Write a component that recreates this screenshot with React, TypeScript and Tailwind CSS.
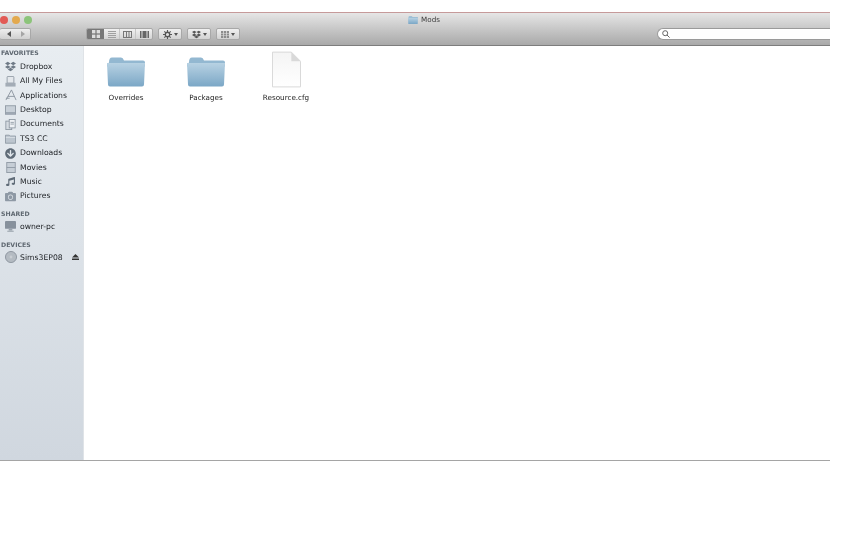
import React from "react";
import { FaDropbox, FaMusic, FaCamera, FaArrowCircleDown } from "react-icons/fa";

const font = "font-['DejaVu_Sans','Liberation_Sans',sans-serif]";

// small blue mac folder
function Folder({ w, h }: { w: number; h: number }) {
  return (
    <svg width={w} height={h} viewBox="0 0 38 30">
      <defs>
        <linearGradient id="fold" x1="0" y1="0" x2="0" y2="1">
          <stop offset="0" stopColor="#b8d2e3" />
          <stop offset="1" stopColor="#7ba7c6" />
        </linearGradient>
      </defs>
      <path d="M2 6 Q2 1 5 1 H14 Q16 1 17 4 H36 Q38 4 38 6 V10 H0 V8 Z" fill="#93b8d1" />
      <path d="M0 6.5 H38 L37 28 Q37 30 35 30 H3 Q1 30 1 28 Z" fill="url(#fold)" />
    </svg>
  );
}

function GrayIcon({ kind }: { kind: string }) {
  const c = "#8b95a0";
  if (kind === "dropbox") return <FaDropbox size={11} color="#6f7a86" />;
  if (kind === "downloads") return <FaArrowCircleDown size={11} color="#5f6b77" />;
  if (kind === "music") return <FaMusic size={9} color="#5f6b77" />;
  if (kind === "pictures") return <FaCamera size={11} color="#8e99a5" />;
  if (kind === "files")
    return (
      <svg width="11" height="11" viewBox="0 0 13 13">
        <rect x="2.5" y="0.5" width="8" height="8" rx="1" fill="#e4e8ec" stroke={c} />
        <path d="M0.5 8 H12.5 V12.5 H0.5 Z" fill="#a3acb6" />
      </svg>
    );
  if (kind === "apps")
    return (
      <svg width="12" height="12" viewBox="0 0 13 13" fill="none" stroke="#8b95a0" strokeWidth="1">
        <path d="M1 12 L7 1 L12 12 M3 8 H10 M1 10 L5 10" />
      </svg>
    );
  if (kind === "desktop")
    return (
      <svg width="11" height="10" viewBox="0 0 13 11">
        <rect x="0.5" y="0.5" width="12" height="10" fill="#c8d0d8" stroke={c} />
        <rect x="1" y="8" width="11" height="2" fill="#98a2ad" />
      </svg>
    );
  if (kind === "documents")
    return (
      <svg width="11" height="11" viewBox="0 0 12 13">
        <rect x="0.5" y="2.5" width="7" height="10" fill="#d5dbe1" stroke={c} />
        <rect x="4.5" y="0.5" width="7" height="10" fill="#eef1f4" stroke={c} />
        <path d="M6 4 H10 M6 6 H10" stroke={c} />
      </svg>
    );
  if (kind === "folder")
    return (
      <svg width="11" height="10" viewBox="0 0 13 11">
        <path d="M0.5 1 H5 L6 2 H12.5 V10.5 H0.5 Z" fill="#bcc5ce" stroke={c} />
        <rect x="1" y="3" width="11" height="1" fill="#dfe4e9" />
      </svg>
    );
  if (kind === "movies")
    return (
      <svg width="10" height="11" viewBox="0 0 11 13">
        <rect x="0.5" y="0.5" width="10" height="12" fill="#c6ced6" stroke={c} />
        <path d="M0.5 6.5 H10.5" stroke={c} />
      </svg>
    );
  if (kind === "pc")
    return (
      <svg width="11" height="11" viewBox="0 0 12 12">
        <rect x="0" y="0" width="12" height="8.5" rx="1" fill="#87919c" />
        <rect x="4" y="8.5" width="4" height="2" fill="#98a2ab" />
        <rect x="2.5" y="10.5" width="7" height="1.5" fill="#a9b2ba" />
      </svg>
    );
  return (
    <svg width="12" height="12" viewBox="0 0 13 13">
      <circle cx="6.5" cy="6.5" r="6" fill="#b4bbc2" stroke="#8b949d" />
      <circle cx="6.5" cy="6.5" r="1.5" fill="#c9ced3" />
    </svg>
  );
}

function Heading({ text, cls }: { text: string; cls: string }) {
  return (
    <div className={`pl-[1px] h-[10px] flex items-center text-[6.2px] font-bold text-[#5f6871] ${cls}`}>{text}</div>
  );
}

function Row({ icon, label, eject }: { icon: string; label: string; eject?: boolean }) {
  return (
    <div className="h-[14.4px] flex items-center text-[7.7px] text-[#1c1f23]">
      <span className="w-[20px] pl-[1px] flex items-center justify-center shrink-0">
        <GrayIcon kind={icon} />
      </span>
      <span className="flex-1">{label}</span>
      {eject && (
        <svg className="mr-[4px]" width="7" height="6" viewBox="0 0 7 6" fill="#333">
          <path d="M3.5 0L7 3.6H0Z" />
          <rect y="4.5" width="7" height="1.5" />
        </svg>
      )}
    </div>
  );
}

function Btn({ children, w }: { children: React.ReactNode; w: string }) {
  return (
    <div className={`${w} h-[12px] rounded-[2px] border border-[#a8a8a8] bg-gradient-to-b from-[#f0f0f0] to-[#d2d2d2] flex items-center justify-center gap-[2px]`}>
      {children}
    </div>
  );
}

function Caret() {
  return <span className="w-0 h-0 border-l-[2px] border-r-[2px] border-t-[3px] border-l-transparent border-r-transparent border-t-[#555]" />;
}

function Item({ label, children }: { label: string; children: React.ReactNode }) {
  return (
    <div className="w-[80px] flex flex-col items-center">
      <div className="h-[38px] flex items-end">{children}</div>
      <div className="mt-[5px] text-[7.2px] text-[#222]">{label}</div>
    </div>
  );
}

export default function App() {
  return (
    <div className={`w-[864px] h-[540px] bg-white overflow-hidden pt-[12px] blur-[0.3px] ${font}`}>
      <div className="w-[830px] h-[449px] flex flex-col border-b border-[#a5a5a5]">
        {/* title bar + toolbar */}
        <div className="h-[34px] shrink-0 border-t border-t-[#c69a9a] border-b border-b-[#7d7d7d] bg-gradient-to-b from-[#e6e6e6] to-[#a9a9a9] flex flex-col">
          <div className="h-[14px] relative flex items-center justify-center">
            <div className="absolute left-0 top-[3px] flex gap-[4.5px]">
              <span className="w-[7.5px] h-[7.5px] rounded-full bg-[#e25a55]" />
              <span className="w-[7.5px] h-[7.5px] rounded-full bg-[#e3a94e]" />
              <span className="w-[7.5px] h-[7.5px] rounded-full bg-[#8cc47a]" />
            </div>
            <div className="ml-[18px] flex items-center gap-[3px] text-[7.2px] text-[#3c3c3c]">
              <Folder w={10} h={8} />
              <span>Mods</span>
            </div>
          </div>
          <div className="flex items-center h-[14px]">
            <div className="w-[31px] h-[12px] rounded-[2px] border border-[#a8a8a8] border-l-0 bg-gradient-to-b from-[#eeeeee] to-[#d0d0d0] flex items-center justify-around pl-[2px]">
              <span className="w-0 h-0 border-y-[3px] border-y-transparent border-r-[4px] border-r-[#555]" />
              <span className="w-0 h-0 border-y-[3px] border-y-transparent border-l-[4px] border-l-[#a5a5a5]" />
            </div>
            <div className="ml-[55px] w-[67px] h-[12px] rounded-[2px] border border-[#a8a8a8] bg-gradient-to-b from-[#f0f0f0] to-[#d4d4d4] flex overflow-hidden">
              <div className="w-[17px] bg-[#777777] flex items-center justify-center">
                <svg width="8" height="8" viewBox="0 0 8 8" fill="#dddddd"><rect width="3.4" height="3.4" /><rect x="4.6" width="3.4" height="3.4" /><rect y="4.6" width="3.4" height="3.4" /><rect x="4.6" y="4.6" width="3.4" height="3.4" /></svg>
              </div>
              <div className="w-[16px] flex items-center justify-center border-r border-[#c6c6c6]">
                <svg width="8" height="7" viewBox="0 0 8 7" stroke="#a0a0a0"><path d="M0 .5H8M0 2.5H8M0 4.5H8M0 6.5H8" /></svg>
              </div>
              <div className="w-[16px] flex items-center justify-center border-r border-[#c6c6c6]">
                <svg width="9" height="7" viewBox="0 0 9 7" fill="none" stroke="#777"><rect x=".5" y=".5" width="8" height="6" /><path d="M3.5 0V7M6 0V7" /></svg>
              </div>
              <div className="flex-1 flex items-center justify-center">
                <svg width="9" height="7" viewBox="0 0 9 7" fill="#666"><rect x="2.5" width="4" height="7" /><rect width="1.5" height="7" /><rect x="7.5" width="1.5" height="7" /></svg>
              </div>
            </div>
            <div className="ml-[5px]">
              <Btn w="w-[24px]">
                <svg width="9" height="9" viewBox="0 0 8 8"><circle cx="4" cy="4" r="2" fill="none" stroke="#555" strokeWidth="1.2" /><path d="M4 0V2M4 6V8M0 4H2M6 4H8M1.2 1.2L2.5 2.5M6.8 1.2L5.5 2.5M1.2 6.8L2.5 5.5M6.8 6.8L5.5 5.5" stroke="#555" strokeWidth="1" /></svg>
                <Caret />
              </Btn>
            </div>
            <div className="ml-[5px]">
              <Btn w="w-[24px]">
                <FaDropbox size={9} color="#555" />
                <Caret />
              </Btn>
            </div>
            <div className="ml-[5px]">
              <Btn w="w-[24px]">
                <svg width="8" height="7" viewBox="0 0 8 7" fill="#8c8c8c"><rect width="2.2" height="2" /><rect x="2.9" width="2.2" height="2" /><rect x="5.8" width="2.2" height="2" /><rect y="2.5" width="2.2" height="2" /><rect x="2.9" y="2.5" width="2.2" height="2" /><rect x="5.8" y="2.5" width="2.2" height="2" /><rect y="5" width="2.2" height="2" /><rect x="2.9" y="5" width="2.2" height="2" /><rect x="5.8" y="5" width="2.2" height="2" /></svg>
                <Caret />
              </Btn>
            </div>
            <div className="ml-auto w-[173px] h-[12px] rounded-l-full border border-r-0 border-[#9a9a9a] bg-white flex items-center pl-[4px]">
              <svg width="8" height="8" viewBox="0 0 8 8" fill="none" stroke="#666" strokeWidth="1"><circle cx="3.2" cy="3.2" r="2.5" /><path d="M5 5L7.6 7.6" /></svg>
            </div>
          </div>
        </div>
        {/* sidebar + content */}
        <div className="flex flex-1 min-h-0">
          <div className="w-[84px] shrink-0 bg-gradient-to-b from-[#e8edf1] to-[#d0d7df] border-r border-[#dfe3e7] pt-[2px]">
            <Heading text="FAVORITES" cls="" />
            <div className="mt-[1.5px]">
              <Row icon="dropbox" label="Dropbox" />
              <Row icon="files" label="All My Files" />
              <Row icon="apps" label="Applications" />
              <Row icon="desktop" label="Desktop" />
              <Row icon="documents" label="Documents" />
              <Row icon="folder" label="TS3 CC" />
              <Row icon="downloads" label="Downloads" />
              <Row icon="movies" label="Movies" />
              <Row icon="music" label="Music" />
              <Row icon="pictures" label="Pictures" />
            </div>
            <Heading text="SHARED" cls="mt-[5px]" />
            <div className="mt-[1px]">
              <Row icon="pc" label="owner-pc" />
            </div>
            <Heading text="DEVICES" cls="mt-[5.5px]" />
            <div className="mt-[1px]">
              <Row icon="disc" label="Sims3EP08" eject />
            </div>
          </div>
          <div className="flex-1 bg-white flex items-start pl-[2px] pt-[4px]">
            <Item label="Overrides">
              <div className="mb-[1px]">
                <Folder w={38} h={31} />
              </div>
            </Item>
            <Item label="Packages">
              <div className="mb-[1px]">
                <Folder w={38} h={31} />
              </div>
            </Item>
            <Item label="Resource.cfg">
              <svg width="29" height="37" viewBox="0 0 30 37">
                <defs>
                  <linearGradient id="pg" x1="0" y1="0" x2="0" y2="1">
                    <stop offset="0" stopColor="#f4f4f4" />
                    <stop offset="1" stopColor="#ffffff" />
                  </linearGradient>
                </defs>
                <path d="M.5 .5 H20 L29.5 10 V36.5 H.5 Z" fill="url(#pg)" stroke="#d8d8d8" />
                <path d="M20 .5 V10 H29.5 Z" fill="#d9d9d9" />
              </svg>
            </Item>
          </div>
        </div>
      </div>
    </div>
  );
}
